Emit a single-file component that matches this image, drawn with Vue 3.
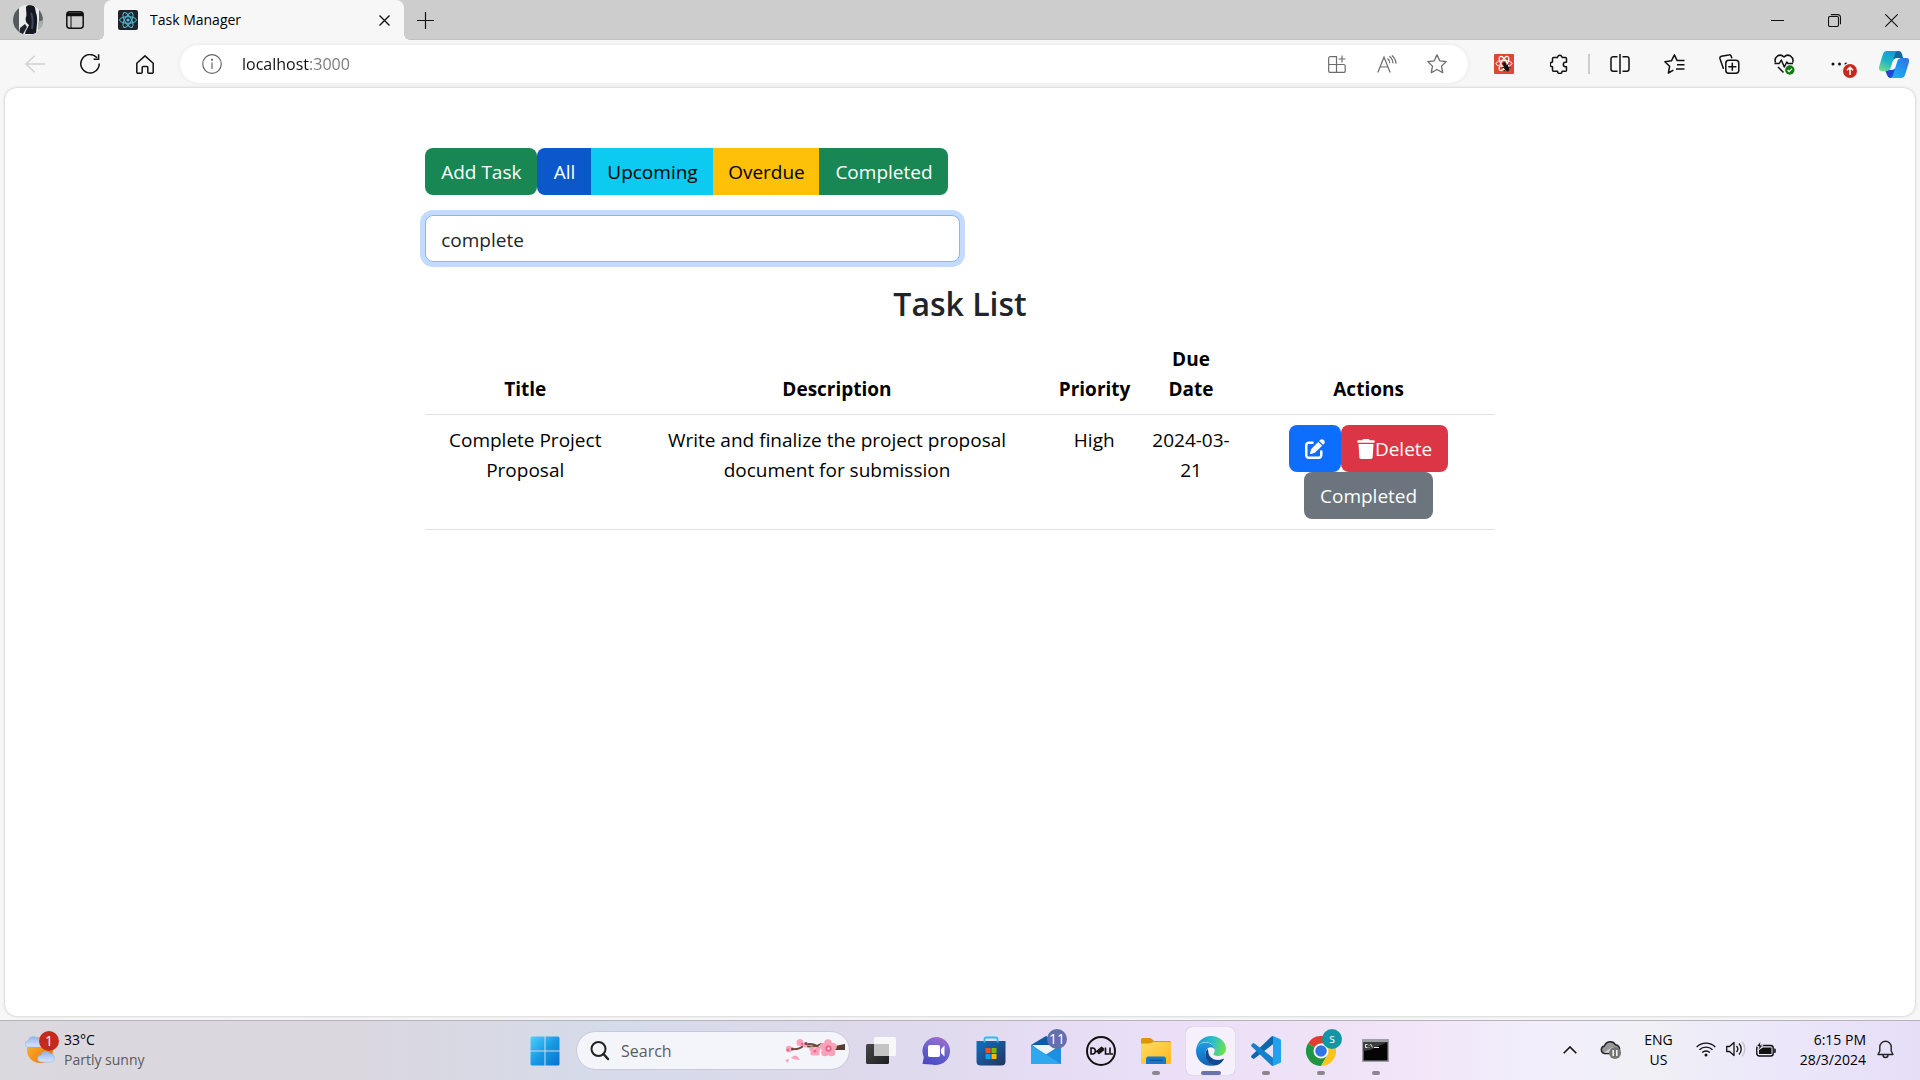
<script setup>
import { ref, computed } from 'vue'

const filter = ref('all')
const query = ref('complete')
const address = ref('localhost:3000')
const webSearch = ref('')

const filters = [
  { id: 'all', label: 'All', tone: 'primary' },
  { id: 'upcoming', label: 'Upcoming', tone: 'info' },
  { id: 'overdue', label: 'Overdue', tone: 'warning' },
  { id: 'completed', label: 'Completed', tone: 'success' },
]

const tasks = ref([
  {
    id: 1,
    title: 'Complete Project Proposal',
    description: 'Write and finalize the project proposal document for submission',
    priority: 'High',
    due: '2024-03-21',
  },
])

const visibleTasks = computed(() =>
  tasks.value.filter((t) => t.title.toLowerCase().includes(query.value.toLowerCase())),
)
</script>

<template>
  <div class="desktop">
    <header class="tabstrip">
      <button class="profile" aria-label="Profile">
        <svg width="30" height="30" viewBox="0 0 30 30">
          <defs><clipPath id="face"><circle cx="15" cy="15" r="15" /></clipPath></defs>
          <g clip-path="url(#face)">
            <rect width="30" height="30" fill="#e9ebec" />
            <path d="M0 0h6v30H0z" fill="#555a5b" />
            <path d="M26 4h4v18h-4z" fill="#5d6263" />
            <path d="M25 17l5-2v9l-5 1z" fill="#aab0b2" />
            <path d="M13 2c2-3 8-3 9 1l1 5c2 5 1 11 0 21H12c0-3 3-6 4-9-3-2-4-5-3-8 1-2 0-6 0-10z" fill="#15181f" />
            <path d="M7 23l5-4 2 3-4 7H6z" fill="#1f252e" />
            <path d="M18 8c2 4 2 9 1 16" stroke="#3d4860" stroke-width="2" fill="none" />
          </g>
        </svg>
      </button>
      <button class="workspaces" aria-label="Tab actions">
        <svg width="18" height="18" viewBox="0 0 18 18" fill="none" stroke="#111" stroke-width="1.5">
          <rect x=".8" y=".8" width="16.4" height="16.4" rx="3" />
          <path d="M1 1.5h16v3.2H1z" fill="#111" stroke="none" />
          <path d="M1 4.5h16" />
          <path d="M5 5v12" stroke-width="1" />
        </svg>
      </button>
      <div class="tab">
        <svg class="favicon" width="20" height="20" viewBox="0 0 20 20" fill="none" stroke="#53c1de">
          <rect width="20" height="20" rx="2" fill="#20232a" stroke="none" />
          <ellipse cx="10" cy="10" rx="8.4" ry="3.3" />
          <ellipse cx="10" cy="10" rx="8.4" ry="3.3" transform="rotate(60 10 10)" />
          <ellipse cx="10" cy="10" rx="8.4" ry="3.3" transform="rotate(120 10 10)" />
          <circle cx="10" cy="10" r="1.6" fill="#53c1de" stroke="none" />
        </svg>
        <span class="tab-title">Task Manager</span>
        <button class="tab-close" aria-label="Close tab">
          <svg width="11" height="11" viewBox="0 0 11 11" stroke="#111" stroke-width="1.4"><path d="M.5 .5l10 10M10.5 .5l-10 10" /></svg>
        </button>
      </div>
      <button class="new-tab" aria-label="New tab">
        <svg width="17" height="17" viewBox="0 0 17 17" stroke="#111" stroke-width="1.2"><path d="M8.5 0v17M0 8.5h17" /></svg>
      </button>
      <div class="window-controls">
        <button aria-label="Minimize"><svg width="13" height="13" viewBox="0 0 13 13" stroke="#111"><path d="M0 6.5h13" /></svg></button>
        <button aria-label="Restore">
          <svg width="13" height="13" viewBox="0 0 13 13" fill="none" stroke="#111" stroke-width="1.1"><rect x=".5" y="2.5" width="10" height="10" rx="1.5" /><path d="M2.8 .6h7a2.7 2.7 0 0 1 2.7 2.7v7" /></svg>
        </button>
        <button aria-label="Close window"><svg width="13" height="13" viewBox="0 0 13 13" stroke="#111" stroke-width="1.1"><path d="M.3 .3l12.4 12.4M12.7 .3L.3 12.7" /></svg></button>
      </div>
    </header>

    <nav class="toolbar" aria-label="Browser">
      <button class="tool" aria-label="Back" disabled>
        <svg width="20" height="18" viewBox="0 0 20 18" fill="none" stroke="#cfcfcf" stroke-width="1.4"><path d="M20 9H1M9.5 .7L.9 9l8.6 8.3" /></svg>
      </button>
      <button class="tool" aria-label="Refresh">
        <svg width="20" height="20" viewBox="0 0 20 20" fill="none" stroke="#111" stroke-width="1.5"><path d="M17 3.8A9.2 9.2 0 1 0 19.2 9.5" /><path d="M18.6 .3v5h-5" /></svg>
      </button>
      <button class="tool" aria-label="Home">
        <svg width="18" height="19" viewBox="0 0 18 19" fill="none" stroke="#111" stroke-width="1.5" stroke-linejoin="round"><path d="M.8 8.2L9 .9l8.2 7.3v8.8a1.2 1.2 0 0 1-1.2 1.2h-3.2a1 1 0 0 1-1-1V12.500a1 1 0 0 0-1-1H7.2a1 1 0 0 0-1 1v4.700a1 1 0 0 1-1 1H2A1.2 1.2 0 0 1 .8 17z" /></svg>
      </button>
      <div class="address">
        <svg width="20" height="20" viewBox="0 0 20 20" fill="none" stroke="#666" stroke-width="1.2"><circle cx="10" cy="10" r="9.3" /><path d="M10 8.5V15" /><circle cx="10" cy="5.8" r=".5" fill="#666" /></svg>
        <input v-model="address" class="address-input" aria-label="Address" spellcheck="false" />
        <button class="addr-btn" aria-label="App available">
          <svg width="18" height="18" viewBox="0 0 18 18" fill="none" stroke="#6b6b6b" stroke-width="1.2"><path d="M8.5 17.4H2.2A1.5 1.5 0 0 1 .7 15.9V3.2A1.5 1.5 0 0 1 2.2 1.7h6.3zM.7 9.5h15a1.5 1.5 0 0 1 1.5 1.5v4.9a1.5 1.5 0 0 1-1.5 1.5H8.5M14 .5v7M10.5 4h7" /></svg>
        </button>
        <button class="addr-btn" aria-label="Read aloud">
          <svg width="20" height="18" viewBox="0 0 20 18" fill="none" stroke="#6b6b6b" stroke-width="1.2"><path d="M.8 17.5L7 2.2l6.2 15.3M3 12h8M10.5 3.5c1.5 1.2 2.400 2.900 2.400 4.700M12.400 1.200c2 1.500 3.400 4 3.500 7M14.800 .4c2.400 1.800 4 5 4.300 8.200" /></svg>
        </button>
        <button class="addr-btn" aria-label="Favorite">
          <svg width="20" height="20" viewBox="0 0 20 20" fill="none" stroke="#6b6b6b" stroke-width="1.3" stroke-linejoin="round"><path d="M10 .9l2.8 5.9 6.400 .8-4.700 4.500 1.200 6.600-5.700-3.200-5.700 3.200 1.200-6.600L.8 7.600l6.400-.8z" /></svg>
        </button>
      </div>
      <button class="tool" aria-label="React Developer Tools">
        <svg width="20" height="20" viewBox="0 0 20 20" fill="none" stroke="#fff"><rect width="20" height="20" rx="1" fill="#de4636" stroke="none" /><ellipse cx="10" cy="9.5" rx="8" ry="3" /><ellipse cx="10" cy="9.5" rx="8" ry="3" transform="rotate(60 10 9.5)" /><ellipse cx="10" cy="9.5" rx="8" ry="3" transform="rotate(120 10 9.5)" /><g stroke="#111" stroke-width=".8" transform="rotate(-30 12 13)"><ellipse cx="12" cy="14" rx="2" ry="3.5" fill="#111" /><circle cx="12" cy="9.5" r="1.3" fill="#111" /><path d="M8.5 11.500l7 4.500M15.500 11.500l-7 4.500" /></g></svg>
      </button>
      <button class="tool" aria-label="Extensions">
        <svg width="18" height="20" viewBox="0 0 18 20" fill="none" stroke="#111" stroke-width="1.5" stroke-linejoin="round"><path d="M3.500 3.600h4a2.300 2.300 0 1 1 4.600 0h3.400a1 1 0 0 1 1 1v3.700h-1a2.200 2.200 0 1 0 0 4.400h1v3.500a1 1 0 0 1-1 1h-3.400a2.300 2.300 0 1 1-4.600 0h-4a1 1 0 0 1-1-1v-3.500a2.300 2.300 0 0 1 0-4.600V4.600a1 1 0 0 1 1-1z" /></svg>
      </button>
      <span class="divider"></span>
      <button class="tool" aria-label="Split screen">
        <svg width="20" height="20" viewBox="0 0 20 20" fill="none" stroke="#111" stroke-width="1.5"><path d="M10 0v20" /><path d="M7.500 2.700H3.200A2.200 2.200 0 0 0 1 4.900v10.200a2.200 2.200 0 0 0 2.200 2.200h4.300M12.500 2.700h4.300A2.200 2.200 0 0 1 19 4.900v10.200a2.200 2.200 0 0 1-2.200 2.200h-4.300" /></svg>
      </button>
      <button class="tool" aria-label="Favorites">
        <svg width="21" height="20" viewBox="0 0 21 20" fill="none" stroke="#111" stroke-width="1.5" stroke-linejoin="round"><path d="M20.500 6.400H13L10.400 .9 7.400 6.800 .9 7.800l4.700 4.500-1.200 6.700 5-2.900M13 10.700h7.500M12 15h8.500" /></svg>
      </button>
      <button class="tool" aria-label="Collections">
        <svg width="21" height="20" viewBox="0 0 21 20" fill="none" stroke="#111" stroke-width="1.5" stroke-linecap="round"><path d="M4.300 14.200L1 4.700a2 2 0 0 1 1.300-2.500L9.800 .9a2 2 0 0 1 2.400 1.300l.5 1.500" /><rect x="6.800" y="6.300" width="13" height="13" rx="3" /><path d="M13.300 9.300v7M9.800 12.800h7" /></svg>
      </button>
      <button class="tool" aria-label="Browser essentials">
        <svg width="21" height="21" viewBox="0 0 21 21" fill="none" stroke="#111" stroke-width="1.5" stroke-linejoin="round"><path d="M1.500 8.500C-.3 3.500 5.500-1.500 10 3c4.500-4.500 10.300 .5 8.700 5.500M.5 9.500h4.800l2-3.500 3 7 2.500-5 1.200 1.500h5M4 13l5.500 5.500" /><circle cx="15.800" cy="16" r="4.700" fill="#107c10" stroke="none" /><path d="M13.600 16l1.600 1.600 2.800-3" stroke="#fff" stroke-width="1.200" /></svg>
      </button>
      <button class="tool" aria-label="Settings and more">
        <svg width="28" height="28" viewBox="0 0 28 28"><g fill="#111"><circle cx="7" cy="14" r="1.500" /><circle cx="13.500" cy="14" r="1.500" /><circle cx="20" cy="14" r="1.500" /></g><circle cx="24" cy="20.500" r="7.800" fill="#f7f7f7" /></svg>
        <svg class="update" width="14" height="14" viewBox="0 0 14 14"><circle cx="7" cy="7" r="7" fill="#c42b1c" /><path d="M7 11V3.500M4 6.200l3-3 3 3" fill="none" stroke="#fff" stroke-width="1.500" /></svg>
      </button>
      <button class="tool copilot" aria-label="Copilot">
        <svg width="30" height="27" viewBox="0 0 30 27">
          <defs>
            <linearGradient id="cp1" x1=".6" y1="0" x2=".2" y2="1"><stop offset="0" stop-color="#0aa0da" /><stop offset=".5" stop-color="#22b3c4" /><stop offset="1" stop-color="#6ade8e" /></linearGradient>
            <linearGradient id="cp2" x1="0" y1="1" x2=".7" y2="0"><stop offset="0" stop-color="#19b7f5" /><stop offset="1" stop-color="#2c79e8" /></linearGradient>
          </defs>
          <path d="M13 0h7q2 0 3 3l1 4h-5l-5 2z" fill="#0a6a9c" />
          <path d="M17 27h-6q-2 0-3-3l-2-5h5l5-2z" fill="#1947d8" />
          <path d="M8 0h11q-2 0-3 3l-4 13q-1 4-5 4H3q-4 0-3-4L4 3q1-3 4-3z" fill="url(#cp1)" />
          <path d="M22 27H11q2 0 3-3l4-13q1-4 5-4h4q4 0 3 4l-4 13q-1 3-4 3z" fill="url(#cp2)" />
          <path d="M14.500 9q1-2 4.500-2-1 2-1.500 4l-2 7q-1 1-4 1 1-1.500 1.500-4z" fill="#fff" />
        </svg>
      </button>
    </nav>

    <main class="page">
      <div class="container">
        <div class="actions-bar">
          <button class="btn success">Add Task</button>
          <div class="btn-group" role="group" aria-label="Filter tasks">
            <button
              v-for="f in filters"
              :key="f.id"
              class="btn"
              :class="[f.tone, { active: filter === f.id }]"
              @click="filter = f.id"
            >{{ f.label }}</button>
          </div>
        </div>
        <input v-model="query" class="task-search" type="text" aria-label="Search tasks" spellcheck="false" />
        <h3>Task List</h3>
        <table>
          <colgroup>
            <col class="c-title" /><col class="c-desc" /><col class="c-prio" /><col class="c-due" /><col class="c-act" />
          </colgroup>
          <thead>
            <tr>
              <th scope="col">Title</th>
              <th scope="col">Description</th>
              <th scope="col">Priority</th>
              <th scope="col">Due Date</th>
              <th scope="col">Actions</th>
            </tr>
          </thead>
          <tbody>
            <tr v-for="t in visibleTasks" :key="t.id">
              <td>{{ t.title }}</td>
              <td>{{ t.description }}</td>
              <td>{{ t.priority }}</td>
              <td>{{ t.due }}</td>
              <td>
                <div class="row-actions">
                  <button class="btn edit" aria-label="Edit">
                    <svg width="20" height="20" viewBox="0 0 512 512" fill="#fff"><path d="M471.6 21.7c-21.9-21.9-57.3-21.9-79.2 0L362.3 51.7l97.9 97.9 30.1-30.1c21.9-21.9 21.9-57.3 0-79.2L471.6 21.7zm-299.2 220c-6.1 6.1-10.8 13.6-13.5 21.9l-29.6 88.8c-2.9 8.6-.6 18.1 5.8 24.6s15.9 8.7 24.6 5.8l88.8-29.6c8.2-2.7 15.7-7.4 21.9-13.5L437.7 172.3 339.7 74.3 172.4 241.7zM96 64C43 64 0 107 0 160V416c0 53 43 96 96 96H352c53 0 96-43 96-96V320c0-17.7-14.3-32-32-32s-32 14.3-32 32v96c0 17.7-14.3 32-32 32H96c-17.7 0-32-14.3-32-32V160c0-17.7 14.3-32 32-32h96c17.7 0 32-14.3 32-32s-14.3-32-32-32H96z" /></svg>
                  </button>
                  <button class="btn danger">
                    <svg width="18" height="20" viewBox="0 0 448 512" fill="#fff"><path d="M135.2 17.7L128 32H32C14.3 32 0 46.3 0 64S14.3 96 32 96H416c17.7 0 32-14.3 32-32s-14.3-32-32-32H320l-7.2-14.3C307.4 6.8 296.3 0 284.2 0H163.8c-12.1 0-23.2 6.8-28.6 17.7zM416 128H32L53.2 467c1.6 25.3 22.6 45 47.9 45H346.9c25.3 0 46.3-19.7 47.9-45L416 128z" /></svg>Delete
                  </button>
                  <button class="btn secondary">Completed</button>
                </div>
              </td>
            </tr>
          </tbody>
        </table>
      </div>
    </main>

    <footer class="taskbar">
      <button class="weather">
        <span class="weather-icon">
          <svg width="30" height="30" viewBox="0 0 30 30">
            <defs>
              <linearGradient id="sun" x1="0" y1="0" x2="1" y2="1"><stop offset="0" stop-color="#f6c02c" /><stop offset="1" stop-color="#ee6a10" /></linearGradient>
              <linearGradient id="cloud" x1="0" y1="0" x2="0" y2="1"><stop offset="0" stop-color="#8fb4ee" /><stop offset="1" stop-color="#d8e6fb" /></linearGradient>
            </defs>
            <circle cx="15" cy="15" r="13" fill="url(#sun)" />
            <path d="M3 12a3 3 0 0 1 0-6 5.500 5.500 0 0 1 10-2 4 4 0 0 1 5 8z" fill="url(#cloud)" stroke="#8fb0e4" stroke-width=".5" />
            <path d="M16 27a3.500 3.500 0 0 1 0-7 5 5 0 0 1 9-1.500A4.300 4.300 0 0 1 26 27z" fill="url(#cloud)" stroke="#7ea4de" stroke-width=".5" />
          </svg>
          <span class="badge alert">1</span>
        </span>
        <span class="weather-text"><span>33°C</span><span class="muted">Partly sunny</span></span>
      </button>

      <div class="dock">
        <button class="app" aria-label="Start">
          <svg width="30" height="30" viewBox="0 0 30 30"><defs><linearGradient id="win" x1="0" y1="0" x2="1" y2="1"><stop offset="0" stop-color="#4fd0fb" /><stop offset=".5" stop-color="#189ae4" /><stop offset="1" stop-color="#0670cf" /></linearGradient></defs><path d="M2 .5h12.500v14H.5V2A1.500 1.500 0 0 1 2 .5zM15.500 .5H28A1.500 1.500 0 0 1 29.500 2v12.500h-14zM.5 15.500h14v14H2A1.500 1.500 0 0 1 .5 28zM15.500 15.500h14V28a1.500 1.500 0 0 1-1.500 1.500H15.500z" fill="url(#win)" /></svg>
        </button>
        <div class="web-search">
          <svg width="20" height="20" viewBox="0 0 20 20" fill="none" stroke="#222" stroke-width="2"><circle cx="8.500" cy="8" r="7" /><path d="M13.500 13l4.500 5" stroke-width="2.500" stroke-linecap="round" /></svg>
          <input v-model="webSearch" type="text" placeholder="Search" aria-label="Search" />
          <svg class="blossom" width="62" height="26" viewBox="0 0 62 26">
            <path d="M7 11q8 1 12-3l6-2q7 0 10 4M19 7q10 4 18-1l12 4" fill="none" stroke="#6b4a3a" stroke-width="1.800" />
            <path d="M51 8l10-2v6H51z" fill="#573a30" />
            <g fill="#f9a3bb"><circle cx="5" cy="11" r="3.200" /><circle cx="16" cy="4.500" r="3.500" /><circle cx="21" cy="7" r="2.500" /><circle cx="28" cy="11" r="2.600" /><circle cx="33.500" cy="11.500" r="2.600" /><circle cx="29" cy="15" r="2.600" /><circle cx="33" cy="15" r="2.600" /><circle cx="44" cy="5" r="3.800" /><circle cx="49" cy="8.500" r="3.800" /><circle cx="47.500" cy="14.500" r="3.800" /><circle cx="41" cy="14.500" r="3.800" /><circle cx="39.500" cy="8.500" r="3.800" /><path d="M1 22l4-1-1 4zM7 20q5-6 9 2-5 0-9-2z" /></g>
            <g fill="#ee6690"><circle cx="31" cy="13" r="1.600" /><circle cx="44.500" cy="10.500" r="3.200" /><circle cx="4" cy="12" r="1.500" /><circle cx="18" cy="6" r="1.200" /></g>
            <circle cx="44.500" cy="10.500" r="1.200" fill="#fbd3de" />
            <g fill="#7a3f40"><circle cx="8.500" cy="11" r="1.500" /><circle cx="22" cy="5.500" r="1.500" /></g>
          </svg>
        </div>
        <button class="app" aria-label="Task view">
          <svg width="30" height="30" viewBox="0 0 30 30"><defs><linearGradient id="tv" x1="0" y1="0" x2="1" y2="1"><stop offset="0" stop-color="#474747" /><stop offset="1" stop-color="#1f1f1f" /></linearGradient></defs><rect y="8" width="23" height="20" rx="1.500" fill="url(#tv)" /><rect x="8" y="1" width="22" height="19" rx="1.500" fill="#f8f8f8" /><path d="M8 8h15v12H9.500A1.500 1.500 0 0 1 8 18.500z" fill="#c4c4c4" /></svg>
        </button>
        <button class="app" aria-label="Chat">
          <svg width="30" height="30" viewBox="0 0 30 30"><defs><linearGradient id="chat" x1=".7" y1="0" x2=".3" y2="1"><stop offset="0" stop-color="#a56ad0" /><stop offset=".4" stop-color="#6e66d0" /><stop offset="1" stop-color="#4a4bc0" /></linearGradient></defs><path d="M15 1a14 14 0 1 1-4 27.400L1.500 28l1.300-7A14 14 0 0 1 15 1z" fill="url(#chat)" /><rect x="7" y="9" width="12" height="12" rx="1.800" fill="#fff" /><path d="M20 13l3.500-3.500V20.500L20 17z" fill="#fff" /></svg>
        </button>
        <button class="app" aria-label="Microsoft Store">
          <svg width="30" height="30" viewBox="0 0 30 30"><defs><linearGradient id="store" x1="0" y1="0" x2="1" y2="1"><stop offset="0" stop-color="#1271bf" /><stop offset="1" stop-color="#23345f" /></linearGradient></defs><path d="M.5 5h29v20.500a4 4 0 0 1-4 4h-21a4 4 0 0 1-4-4z" fill="url(#store)" /><path d="M8.500 6.500V3A1.500 1.500 0 0 1 10 1.500h10A1.500 1.500 0 0 1 21.500 3v3.500" fill="none" stroke="#2bbdf0" stroke-width="1.800" /><path d="M9.500 12h5v5h-5z" fill="#f25022" /><path d="M15.500 12h5v5h-5z" fill="#7fba00" /><path d="M9.500 18h5v5h-5z" fill="#00a4ef" /><path d="M15.500 18h5v5h-5z" fill="#ffb900" /></svg>
        </button>
        <button class="app" aria-label="Mail">
          <svg width="30" height="30" viewBox="0 0 30 30"><path d="M0 9L15 0l15 9v8H0z" fill="#0b5cad" /><path d="M1 9h28L15 20z" fill="#f1f3f6" /><path d="M15 18.500L30 9v19H0V9z" fill="#1c8fe0" /><path d="M0 9l30 19H0z" fill="#2fa8ee" /></svg>
          <span class="badge count">11</span>
        </button>
        <button class="app" aria-label="Dell">
          <svg width="30" height="30" viewBox="0 0 30 30" fill="none" stroke="#111"><circle cx="15" cy="15" r="14" stroke-width="2" /><path d="M5 12v6h1.500a2.800 3 0 0 0 0-6zM19.500 11.500V18h3.500M24 11.500V18h3M10.500 15.500l5-4 1.500 1-4.500 3.500zM13 17.500l5-4M11 15.500l2.500 2.500" stroke-width="1.600" /></svg>
        </button>
        <button class="app running" aria-label="File Explorer">
          <svg width="30" height="30" viewBox="0 0 30 30"><defs><linearGradient id="fold" x1="0" y1="0" x2="1" y2="1"><stop offset="0" stop-color="#ffdb66" /><stop offset="1" stop-color="#fcb91a" /></linearGradient></defs><path d="M0 3.500A1.500 1.500 0 0 1 1.500 2h8L13 5h15.500A1.500 1.500 0 0 1 30 6.500V12H0z" fill="#dd9505" /><path d="M0 7.500h9L12.500 6H28.500A1.500 1.500 0 0 1 30 7.500v19a1.500 1.500 0 0 1-1.500 1.500h-27A1.500 1.500 0 0 1 0 26.500z" fill="url(#fold)" /><path d="M5 28v-5a2.500 2.500 0 0 1 2.500-2.500h15A2.500 2.500 0 0 1 25 23v5z" fill="#1478cc" /><path d="M8.500 24.300h13" stroke="#0b4f91" stroke-width="1.200" /></svg>
        </button>
        <button class="app running current" aria-label="Microsoft Edge">
          <svg width="30" height="30" viewBox="0 0 30 30">
            <defs>
              <linearGradient id="eg1" x1="0" y1=".3" x2="1" y2=".5"><stop offset="0" stop-color="#1a95dc" /><stop offset=".55" stop-color="#2dc0c8" /><stop offset="1" stop-color="#6ee24a" /></linearGradient>
              <linearGradient id="eg2" x1="0" y1="0" x2="0" y2="1"><stop offset="0" stop-color="#1b9de2" /><stop offset="1" stop-color="#1161b8" /></linearGradient>
            </defs>
            <path d="M.3 13C1.200 5.500 7.500 0 15 0c8.500 0 15 6 15 12.500 0 4.500-3.300 7.500-7.500 7.500-3.500 0-5.500-1.200-5-2.200 .4-.8 1.300-1.500 1.300-3.300C18.800 9.500 14 6 9.500 6 5 6 1.500 9 .3 13z" fill="url(#eg1)" />
            <path d="M0 15C0 10 4 6.500 9.500 6.500c4.700 0 8.800 3 9.200 7-1-1.700-2.700-2.300-4.200-2.300-3 0-5 3.300-5 7 0 5 3.500 9.500 9 11.200C8.500 31.500 0 24.500 0 15z" fill="url(#eg2)" />
            <path d="M11.500 13c-4.500 4.500-1.500 15 7 16.500 4 0 7.500-3 9.300-6 .4-.7-.2-1-.7-.8-6.100 3-13.600 .3-14.600-5.700-.3-1.700-.2-3-1-4z" fill="#0f4a8f" />
          </svg>
        </button>
        <button class="app running" aria-label="Visual Studio Code">
          <svg width="30" height="30" viewBox="0 0 30 30"><path d="M22 0l7 3a1.800 1.800 0 0 1 1 1.600v20.800a1.800 1.800 0 0 1-1 1.600l-7 3z" fill="#23a2ec" /><path d="M22 0v8.200L3.500 22.500a1.400 1.400 0 0 1-1.800 0L.6 21.400a1.200 1.200 0 0 1 0-1.800L20.500 .6z" fill="#0a66ad" /><path d="M22 30v-8.200L3.500 7.500a1.400 1.400 0 0 0-1.800 0L.6 8.600a1.200 1.200 0 0 0 0 1.800l19.900 19z" fill="#1480ce" /></svg>
        </button>
        <button class="app running" aria-label="Google Chrome">
          <svg width="30" height="30" viewBox="0 0 30 30"><path d="M15 15L2 7.500A15 15 0 0 1 28 7.500H15z" fill="#e33b2e" /><path d="M15 15L2 7.500A15 15 0 0 0 15 30l6.500-11.300z" fill="#229342" /><path d="M15 7.500h13A15 15 0 0 1 15 30l6.500-11.300z" fill="#fcc31a" /><circle cx="15" cy="15" r="7.500" fill="#fff" /><circle cx="15" cy="15" r="5.800" fill="#3274e8" /></svg>
          <span class="badge account">s</span>
        </button>
        <button class="app running" aria-label="Command Prompt">
          <svg width="27" height="23" viewBox="0 0 27 23"><rect width="27" height="23" fill="#9da0a5" /><path d="M1.500 3h24v18.500h-24z" fill="#050505" /><path d="M1.500 3h24L8 11l-6.500 1z" fill="#3d3d3d" /><path d="M5.500 5.500H3.500v3h2M7 5.800v.8M7 7.900v.8M8.500 5l2 3.500M12 8.500h5" stroke="#e8e8e8" fill="none" /></svg>
        </button>
      </div>

      <div class="tray">
        <button class="chevron" aria-label="Show hidden icons"><svg width="14" height="8" viewBox="0 0 14 8" fill="none" stroke="#111" stroke-width="1.600"><path d="M.7 7.300L7 1l6.300 6.300" /></svg></button>
        <button class="cloud" aria-label="OneDrive">
          <svg width="21" height="19" viewBox="0 0 21 19"><path d="M4.500 13.500a3.800 3.800 0 0 1 0-7.500A6 6 0 0 1 15.500 4.800a4.300 4.300 0 0 1 4 5.200v3.500z" fill="#999" stroke="#222" stroke-width="1.400" /><path d="M4 12.800l8-5.500 6 1-3 4.500z" fill="#d6d6d6" /><circle cx="15" cy="13" r="6" fill="#767676" /><path d="M13.200 10v6M16.800 10v6" stroke="#fff" stroke-width="1.400" /></svg>
        </button>
        <button class="language"><span>ENG</span><span>US</span></button>
        <button class="status" aria-label="Network, volume, battery">
          <svg width="20" height="16" viewBox="0 0 20 16" fill="none" stroke="#111" stroke-width="1.400"><path d="M.7 6a13.200 13.200 0 0 1 18.600 0M3.500 8.800a9.200 9.200 0 0 1 13 0M6.200 11.500a5.400 5.400 0 0 1 7.600 0" /><circle cx="10" cy="14" r="1.500" fill="#111" stroke="none" /></svg>
          <svg width="20" height="16" viewBox="0 0 20 16" fill="none" stroke="#111" stroke-width="1.300" stroke-linejoin="round"><path d="M.7 5.500h2.800L8 1.500v13l-4.500-4H.7zM10.500 5a4.500 4.500 0 0 1 0 6M13 2.500a8 8 0 0 1 0 11" /><path d="M16 .8a10.500 10.500 0 0 1 0 14.400" stroke="#c5c2cb" /></svg>
          <svg width="20" height="17" viewBox="0 0 20 17"><rect x=".8" y="4.500" width="16.400" height="10.500" rx="2.500" fill="none" stroke="#111" stroke-width="1.400" /><path d="M3 9l4-2.500h8.500V13H3z" fill="#111" /><path d="M18.200 7.500h.6a1 1 0 0 1 1 1V11a1 1 0 0 1-1 1h-.6z" fill="#111" /><path d="M4.800 0L.5 5.500h2.600L2 10l5-5.800H4.500z" fill="#111" stroke="#f1eef9" stroke-width=".8" /></svg>
        </button>
        <button class="clock"><span>6:15 PM</span><span>28/3/2024</span></button>
        <button class="bell" aria-label="Notifications"><svg width="17" height="19" viewBox="0 0 17 19" fill="none" stroke="#222" stroke-width="1.400" stroke-linejoin="round"><path d="M2.800 7a5.700 5.700 0 0 1 11.400 0v4l1.800 3.500H1L2.800 11zM6 15a2.500 2.500 0 0 0 5 0" /></svg></button>
      </div>
    </footer>
  </div>
</template>

<style>
body {
  margin: 0;
}
</style>

<style scoped>
.desktop {
  display: flex;
  flex-direction: column;
  min-height: 100vh;
  background: #f7f7f7;
  color: #000;
  font-family: "Open Sans", "Noto Sans", sans-serif;
}
.desktop * {
  box-sizing: border-box;
}
button,
input {
  font: inherit;
  color: inherit;
}
button {
  margin: 0;
  padding: 0;
  border: 0;
  background: none;
}
svg {
  display: block;
  flex: none;
}

/* Tab strip */
.tabstrip {
  display: flex;
  align-items: center;
  height: 40px;
  background: #cdcdcd;
  box-shadow: inset 0 -1px 0 #c0c0c0;
}
.profile {
  margin-left: 13px;
}
.workspaces {
  margin-left: 23px;
}
.tab {
  position: relative;
  display: flex;
  align-items: center;
  width: 300px;
  height: 40px;
  margin-left: 20px;
  padding: 0 14px;
  border-radius: 8px 8px 0 0;
  background: #f7f7f7;
}
.tab::before,
.tab::after {
  content: "";
  position: absolute;
  bottom: 0;
  width: 6px;
  height: 6px;
}
.tab::before {
  right: 100%;
  background: radial-gradient(circle at 0 0, #cdcdcd 6px, #f7f7f7 6px);
}
.tab::after {
  left: 100%;
  background: radial-gradient(circle at 100% 0, #cdcdcd 6px, #f7f7f7 6px);
}
.tab-title {
  flex: 1;
  margin-left: 12px;
  font-size: 14px;
  line-height: 20px;
}
.new-tab {
  margin-left: 13px;
}
.window-controls {
  display: flex;
  margin-left: auto;
}
.window-controls button {
  display: flex;
  align-items: center;
  justify-content: center;
  width: 57px;
  height: 40px;
}

/* Toolbar */
.toolbar {
  display: flex;
  align-items: center;
  height: 48px;
  padding-left: 7px;
}
.tool {
  position: relative;
  display: flex;
  align-items: center;
  justify-content: center;
  width: 55px;
  height: 40px;
}
.copilot {
  width: 53px;
}
.update {
  position: absolute;
  right: 10px;
  bottom: 6px;
}
.address {
  display: flex;
  flex: 1;
  align-items: center;
  height: 38px;
  margin: 0 8px;
  padding: 0 6px 0 22px;
  border-radius: 19px;
  background: #fff;
  box-shadow: 0 0 4px rgba(0, 0, 0, 0.08);
}
.address-input {
  flex: 1;
  min-width: 0;
  margin-left: 20px;
  padding: 0;
  border: 0;
  outline: 0;
  font-size: 16px;
  line-height: 24px;
  color: transparent;
  background: linear-gradient(90deg, #111 68px, #767676 68px);
  background-clip: text;
}
.addr-btn {
  display: flex;
  justify-content: center;
  width: 50px;
}
.divider {
  width: 2px;
  height: 20px;
  margin: 0 2px;
  background: #cdcdcd;
}

/* Task manager page */
.page {
  flex: 1;
  margin: 0 5px 4px;
  border-radius: 12px;
  background: #fff;
  box-shadow: 0 0 3px rgba(0, 0, 0, 0.25);
}
.container {
  width: 56%;
  margin: 0 auto;
  padding-top: 60px;
  font-size: 19px;
  line-height: 30px;
}
.actions-bar {
  display: flex;
}
.btn-group {
  display: grid;
  grid-template-columns: 54px 122px 106px 129px;
}
.btn {
  display: flex;
  align-items: center;
  justify-content: center;
  height: 47px;
  padding: 1px 16px 0;
  border-radius: 8px;
  line-height: 30px;
  white-space: nowrap;
  color: #fff;
}
.btn-group .btn {
  padding: 1px 0 0;
}
.btn-group .btn:not(:first-child) {
  border-top-left-radius: 0;
  border-bottom-left-radius: 0;
}
.btn-group .btn:not(:last-child) {
  border-top-right-radius: 0;
  border-bottom-right-radius: 0;
}
.success {
  background: #198754;
}
.primary,
.edit {
  background: #0d6efd;
}
.primary.active {
  background: #0a58ca;
}
.info {
  background: #0dcaf0;
  color: #000;
}
.warning {
  background: #ffc107;
  color: #000;
}
.danger {
  background: #dc3545;
}
.secondary {
  background: #6c757d;
}
.task-search {
  display: block;
  width: 50%;
  height: 47px;
  margin-top: 20px;
  padding: 2px 15px 0;
  border: 1px solid #86b7fe;
  border-radius: 8px;
  outline: 0;
  box-shadow: 0 0 0 5px #c2dbfe;
  background: #fff;
  color: #212529;
}
h3 {
  margin: 21px 0 9px;
  font-size: 32px;
  font-weight: 600;
  line-height: 42px;
  text-align: center;
  color: #212529;
}
table {
  width: 100%;
  table-layout: fixed;
  border-collapse: collapse;
  text-align: center;
}
.c-title {
  width: 18.7%;
}
.c-desc {
  width: 39.6%;
}
.c-prio {
  width: 8.5%;
}
.c-due {
  width: 9.6%;
}
.c-act {
  width: 23.6%;
}
th,
td {
  padding: 10px;
  border-bottom: 1px solid #dee2e6;
}
th {
  font-weight: 700;
  vertical-align: bottom;
}
td {
  vertical-align: top;
}
.row-actions {
  display: flex;
  flex-wrap: wrap;
  justify-content: center;
}

/* Taskbar */
.taskbar {
  display: grid;
  grid-template-columns: 1fr auto 1fr;
  align-items: center;
  height: 60px;
  border-top: 1px solid #b4b2bb;
  background: linear-gradient(90deg, #dad9de 0%, #dbd7df 18%, #d5dbea 32%, #ddd9eb 44%, #e8def6 58%, #f1e4f8 72%, #f2eefb 80%, #f0f0f5 86%, #ece8fa 92%, #e6def8 100%);
  font-size: 14px;
  line-height: 20px;
}
.weather {
  display: flex;
  align-items: center;
  margin-left: 25px;
  padding-bottom: 2px;
  text-align: left;
}
.weather-icon {
  position: relative;
}
.weather-text {
  display: flex;
  flex-direction: column;
  margin-left: 9px;
}
.muted {
  color: #5a595e;
}
.badge {
  position: absolute;
  display: flex;
  align-items: center;
  justify-content: center;
  width: 20px;
  height: 20px;
  border-radius: 50%;
  color: #fff;
}
.alert {
  top: -4px;
  right: -4px;
  background: #c42b1c;
}
.count {
  top: 2px;
  right: 6px;
  background: #6271ab;
}
.account {
  top: 2px;
  right: 6px;
  background: #0f97a5;
  font-size: 12px;
}
.dock {
  display: flex;
  align-items: center;
}
.app {
  position: relative;
  display: flex;
  align-items: center;
  justify-content: center;
  width: 55px;
  height: 48px;
}
.running::after {
  content: "";
  position: absolute;
  bottom: 0;
  width: 8px;
  height: 4px;
  border-radius: 2px;
  background: #8b858f;
}
.current {
  width: 49px;
  margin: 0 3px;
  border-radius: 6px;
  background: #f5f0fc;
  box-shadow: 0 0 1px rgba(0, 0, 0, 0.3);
}
.current::after {
  width: 20px;
  background: #6773ac;
}
.web-search {
  display: flex;
  align-items: center;
  width: 274px;
  height: 39px;
  margin: 0 3px 0 4px;
  padding: 0 3px 0 13px;
  border: 1px solid #c9c9dc;
  border-radius: 20px;
  background: #f4f5fa;
  font-size: 16px;
}
.web-search input {
  flex: 1;
  min-width: 0;
  margin-left: 11px;
  padding: 0;
  border: 0;
  outline: 0;
  background: none;
}
.web-search input::placeholder {
  color: #5c5c60;
  opacity: 1;
}
.tray {
  display: flex;
  align-items: center;
  justify-content: flex-end;
  padding: 0 26px 2px 0;
}
.cloud {
  margin-left: 23px;
}
.language {
  display: flex;
  flex-direction: column;
  align-items: center;
  margin-left: 23px;
}
.status {
  display: flex;
  gap: 10px;
  margin-left: 23px;
}
.clock {
  display: flex;
  flex-direction: column;
  align-items: flex-end;
  margin-left: 24px;
}
.bell {
  margin-left: 11px;
}
</style>
